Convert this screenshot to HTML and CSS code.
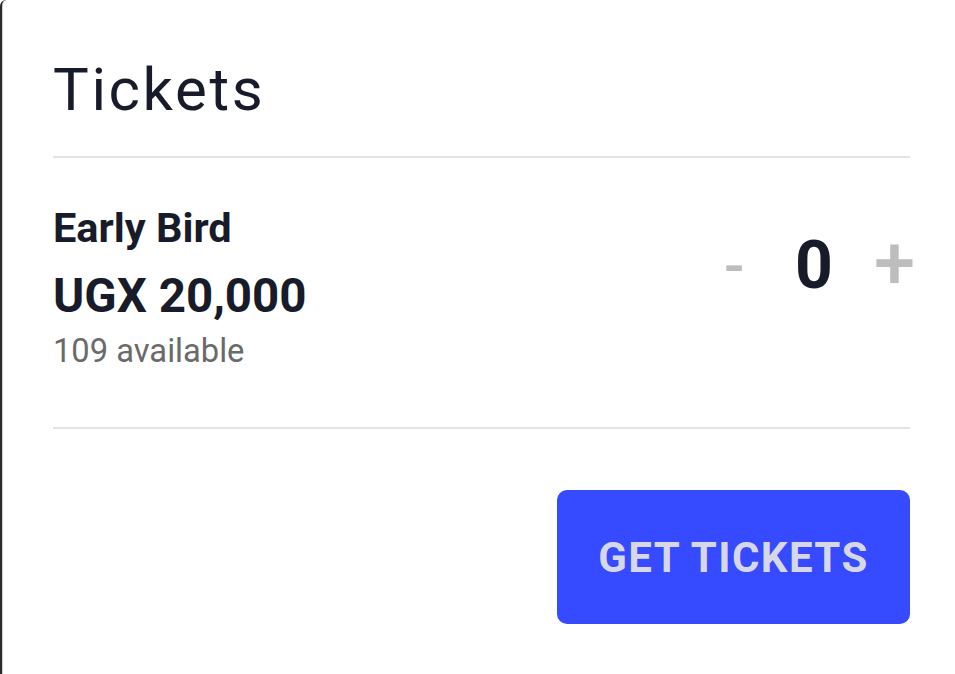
FILE: index.html
```html
<!DOCTYPE html>
<html lang="en">
<head>
<meta charset="utf-8">
<title>Tickets</title>
<link rel="stylesheet" href="styles.css">
</head>
<body>
<div class="card">
  <h1 class="title">Tickets</h1>
  <div class="divider"></div>
  <div class="ticket">
    <div class="info">
      <div class="name">Early Bird</div>
      <div class="price">UGX 20,000</div>
      <div class="avail">109 available</div>
    </div>
    <div class="qty">
      <button class="step minus" type="button">-</button>
      <span class="count">0</span>
      <button class="step plus" type="button">+</button>
    </div>
  </div>
  <div class="divider"></div>
  <div class="actions">
    <button class="get" type="button">GET TICKETS</button>
  </div>
</div>
</body>
</html>
```
FILE: styles.css
```css
html, body {
  margin: 0;
  padding: 0;
  background: #ffffff;
}
body {
  font-family: Roboto, "Liberation Sans", sans-serif;
  color: #181b29;
}
.card {
  box-sizing: border-box;
  height: 674px;
  border-left: 2px solid #2a2a2a;
  border-top-left-radius: 6px;
  box-shadow: inset 1px 0 0 #d0d0d0;
  padding: 55px 45px 0 51px;
}
.title {
  margin: 0;
  font-size: 60px;
  line-height: 70px;
  font-weight: 400;
  letter-spacing: 2.6px;
}
.divider {
  height: 2px;
  background: #e3e3e3;
  margin-top: 31px;
}
.ticket {
  display: flex;
  justify-content: space-between;
  align-items: flex-start;
  padding: 46px 0 25px;
}
.name {
  font-size: 41.5px;
  line-height: 48px;
  font-weight: 700;
}
.price {
  font-size: 47.5px;
  line-height: 54px;
  font-weight: 700;
  margin-top: 17px;
}
.avail {
  font-size: 32.7px;
  line-height: 40px;
  color: #6a6a6a;
  margin-top: 8px;
}
.qty {
  display: flex;
  align-items: center;
  margin-top: 24px;
  margin-right: -5px;
}
.step {
  background: none;
  border: 0;
  padding: 0;
  font-family: inherit;
  color: #bdbdbd;
  line-height: 70px;
  font-weight: 500;
  cursor: pointer;
}
.minus {
  width: 20px;
  font-size: 60px;
}
.plus {
  font-size: 74px;
  margin-bottom: 5px;
}
.count {
  font-size: 66px;
  line-height: 70px;
  font-weight: 700;
  margin: 0 41px 0 51px;
}
.actions {
  display: flex;
  justify-content: flex-end;
  padding-top: 61px;
}
.get {
  width: 353px;
  height: 134px;
  border: 0;
  border-radius: 10px;
  background: #364aff;
  color: #d6d7e8;
  font-family: inherit;
  font-size: 42px;
  font-weight: 700;
  letter-spacing: 1.4px;
  cursor: pointer;
}
```
